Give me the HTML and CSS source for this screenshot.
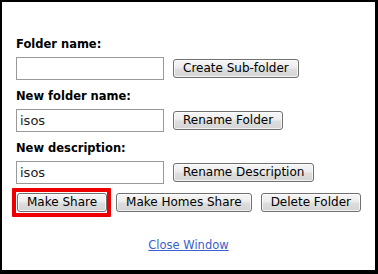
FILE: index.html
```html
<!DOCTYPE html>
<html>
<head>
<meta charset="utf-8">
<link rel="stylesheet" href="styles.css">
</head>
<body>
<div class="frame">
  <form class="form">
    <div class="field">
      <label class="label">Folder name:</label>
      <div class="row">
        <input class="text" type="text" value="">
        <button type="button" class="btn">Create Sub-folder</button>
      </div>
    </div>
    <div class="field">
      <label class="label">New folder name:</label>
      <div class="row">
        <input class="text" type="text" value="isos">
        <button type="button" class="btn">Rename Folder</button>
      </div>
    </div>
    <div class="field">
      <label class="label">New description:</label>
      <div class="row">
        <input class="text" type="text" value="isos">
        <button type="button" class="btn">Rename Description</button>
      </div>
    </div>
    <div class="actions">
      <span class="focus-wrap"><button type="button" class="btn">Make Share</button></span>
      <button type="button" class="btn">Make Homes Share</button>
      <button type="button" class="btn">Delete Folder</button>
    </div>
  </form>
  <div class="footer"><a class="link" href="#">Close Window</a></div>
</div>
</body>
</html>
```
FILE: styles.css
```css
* { box-sizing: border-box; }
html, body { margin: 0; padding: 0; background: #000; }
.frame {
  width: 378px;
  height: 274px;
  background: #fff;
  border-style: solid;
  border-color: #000;
  border-width: 2px 3px 4px 2px;
  font-family: "DejaVu Sans", Verdana, sans-serif;
  color: #000;
  padding: 36px 0 0 14px;
}
.form { display: flex; flex-direction: column; }
.field { display: flex; flex-direction: column; gap: 6px; margin-bottom: 10px; }
.label {
  font-weight: bold;
  font-size: 11.5px;
  line-height: 13px;
  height: 13px;
  color: #000;
}
.row { display: flex; align-items: center; gap: 9px; }
.text {
  width: 148px;
  height: 23px;
  margin: 0;
  border: 1px solid #999;
  padding: 0 3px;
  font-family: "DejaVu Sans", Verdana, sans-serif;
  font-size: 13px;
  color: #222;
  background: #fff;
  outline: none;
}
.btn {
  height: 19px;
  margin: 0;
  padding: 0 9px;
  border: 1px solid #707070;
  border-radius: 3px;
  background: linear-gradient(#f6f6f6 0%, #ececec 45%, #dddddd 55%, #d4d4d4 100%);
  box-shadow: inset 0 0 0 1px rgba(255,255,255,0.7);
  font-family: "DejaVu Sans", Verdana, sans-serif;
  font-size: 12px;
  line-height: 17px;
  color: #000;
  white-space: nowrap;
}
.actions { display: flex; gap: 9px; margin-top: -1px; padding-left: 1px; }
.focus-wrap { position: relative; display: flex; }
.focus-wrap::after {
  content: "";
  position: absolute;
  top: -5px;
  bottom: -5px;
  left: -5px;
  right: -4px;
  border: 4px solid #ee0000;
  border-radius: 1px;
  pointer-events: none;
}
.footer {
  text-align: center;
  margin-top: 27px;
  padding-right: 14px;
  font-size: 11.5px;
  line-height: 13px;
}
.link { color: #3a5fcd; text-decoration: underline; }
```
